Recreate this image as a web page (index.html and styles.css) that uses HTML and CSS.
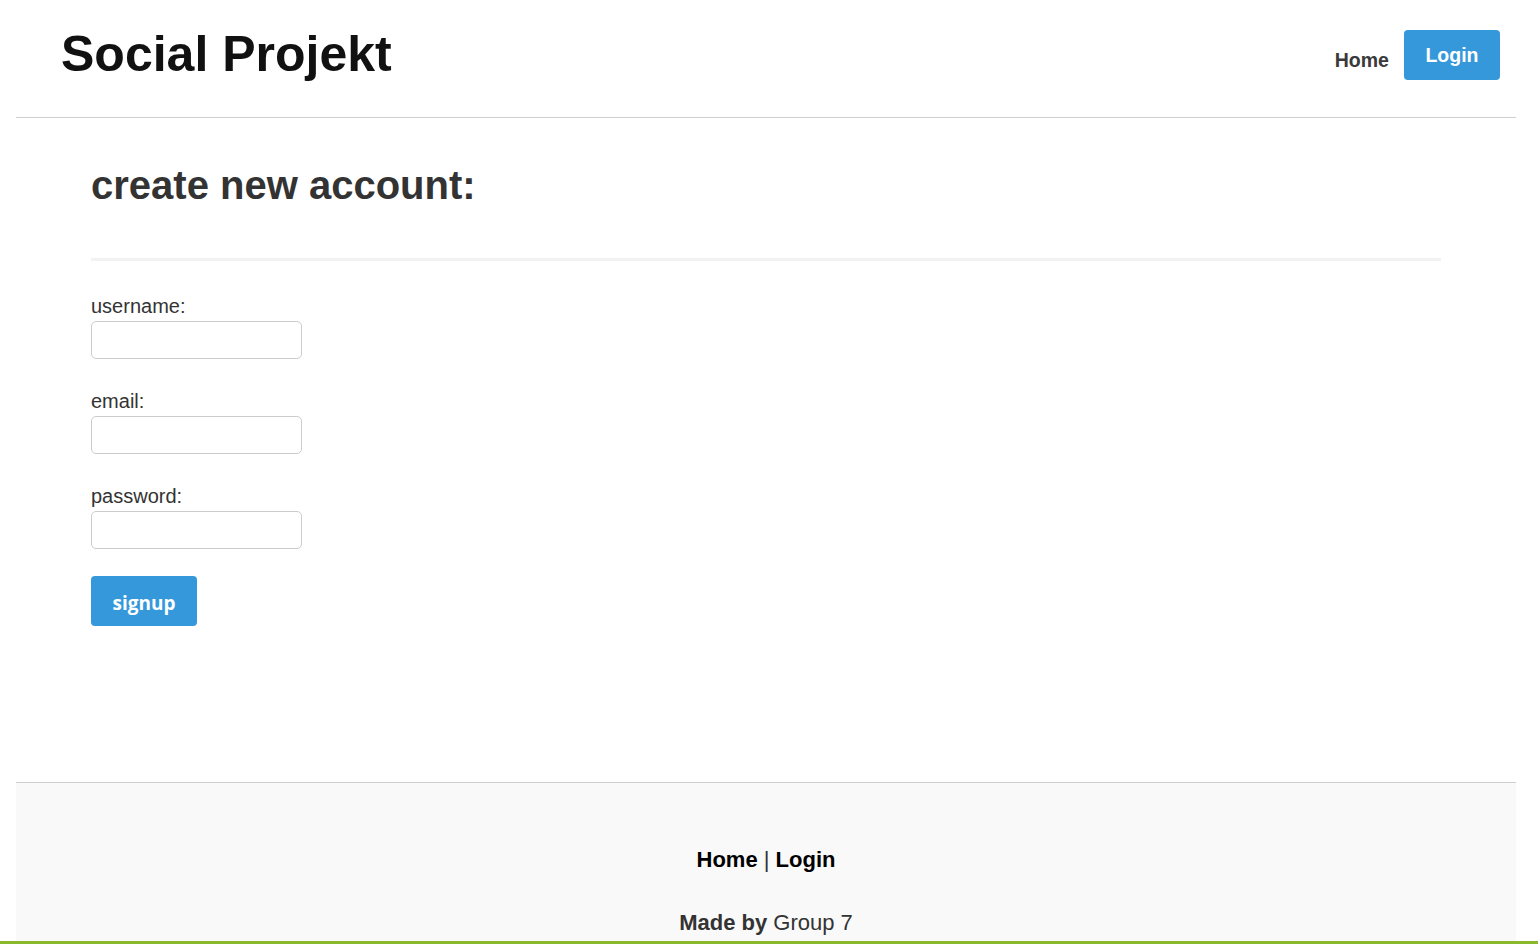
FILE: index.html
```html
<!DOCTYPE html>
<html lang="en">
<head>
<meta charset="utf-8">
<title>Social Projekt - Signup</title>
<link rel="stylesheet" href="styles.css">
</head>
<body>
<div class="page">
  <div class="wrap">
    <header class="site-header">
      <h1 class="brand">Social Projekt</h1>
      <nav class="top-nav">
        <a class="nav-link" href="#">Home</a>
        <a class="btn nav-btn" href="#">Login</a>
      </nav>
    </header>
    <main class="content">
      <h2 class="page-title">create new account:</h2>
      <hr class="divider">
      <form class="signup-form">
        <div class="field">
          <label class="field-label" for="username">username:</label>
          <input class="field-input" id="username" type="text">
        </div>
        <div class="field">
          <label class="field-label" for="email">email:</label>
          <input class="field-input" id="email" type="email">
        </div>
        <div class="field">
          <label class="field-label" for="password">password:</label>
          <input class="field-input" id="password" type="password">
        </div>
        <button class="btn submit-btn" type="button">signup</button>
      </form>
    </main>
    <footer class="site-footer">
      <p class="footer-links"><a href="#">Home</a> <span class="sep">|</span> <a href="#">Login</a></p>
      <p class="footer-credit"><strong>Made by</strong> Group 7</p>
    </footer>
  </div>
  <div class="green-bar"></div>
</div>
</body>
</html>
```

FILE: styles.css
```css
* { box-sizing: border-box; }
html, body { margin: 0; padding: 0; }
body {
  font-family: "Liberation Sans", Arial, sans-serif;
  color: #333;
  background: #fff;
}
.page {
  min-height: 944px;
  display: flex;
  flex-direction: column;
}
.wrap {
  flex: 1;
  width: 1500px;
  margin-left: 16px;
  display: flex;
  flex-direction: column;
}
.site-header {
  height: 118px;
  border-bottom: 1px solid #cfcfcf;
  display: flex;
  justify-content: space-between;
  align-items: flex-start;
  padding: 0 16px 0 45px;
}
.brand {
  margin: 29px 0 0;
  font-size: 50px;
  line-height: 50px;
  font-weight: 700;
  color: #111;
}
.top-nav {
  display: flex;
  align-items: flex-start;
  gap: 15px;
  margin-top: 30px;
}
.nav-link {
  font-size: 19.5px;
  line-height: 24px;
  font-weight: 700;
  color: #3a3a3a;
  text-decoration: none;
  padding-top: 18px;
}
.btn {
  display: inline-block;
  background: #3498db;
  color: #fff;
  border: 0;
  border-radius: 4px;
  font-weight: 700;
  text-decoration: none;
}
.nav-btn {
  font-size: 19.5px;
  line-height: 24px;
  padding: 13px 21.5px;
}
.content {
  flex: 1;
  padding: 0 75px;
}
.page-title {
  margin: 44px 0 0;
  font-size: 40px;
  line-height: 46px;
  font-weight: 700;
  color: #333;
}
.divider {
  margin: 50px 0 0;
  border: 0;
  height: 3px;
  background: #f2f2f2;
}
.signup-form {
  display: flex;
  flex-direction: column;
  align-items: flex-start;
  padding-top: 34px;
}
.field {
  display: flex;
  flex-direction: column;
  align-items: flex-start;
  margin-bottom: 31px;
}
.field:last-of-type { margin-bottom: 27px; }
.field-label {
  font-size: 20px;
  line-height: 23px;
  color: #333;
  margin-bottom: 3px;
}
.field-input {
  width: 211px;
  height: 38px;
  border: 1px solid #ccc;
  border-radius: 5px;
  background: #fff;
  font-size: 16px;
  padding: 4px 8px;
}
.submit-btn {
  width: 106px;
  height: 50px;
  font-family: "Open Sans", "Noto Sans", sans-serif;
  font-size: 19px;
  padding: 3px 0 0;
  cursor: pointer;
}
.site-footer {
  height: 159px;
  border-top: 1px solid #cfcfcf;
  background: #f9f9f9;
  text-align: center;
  padding-top: 64px;
  font-size: 22px;
  line-height: 25px;
  color: #333;
}
.site-footer p { margin: 0; }
.footer-links a {
  color: #000;
  font-weight: 700;
  text-decoration: none;
}
.footer-links .sep { color: #333; }
.footer-credit { margin-top: 38px !important; }
.footer-credit strong { font-weight: 700; }
.green-bar {
  height: 3px;
  background: #8aba2c;
}
```
